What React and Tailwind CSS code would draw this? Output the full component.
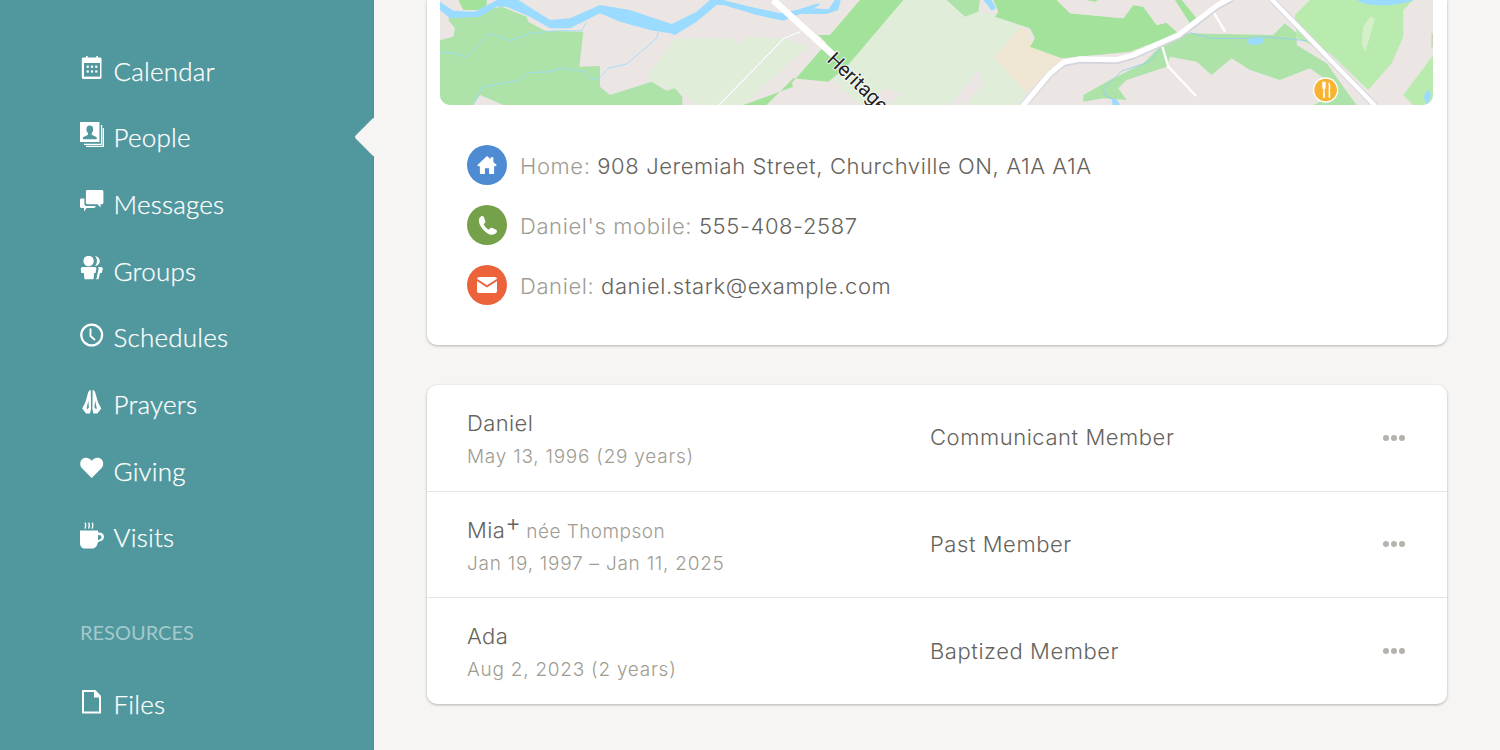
const TEAL = "#51979E";

const Calendar = () => (
  <svg width="24" height="24" viewBox="0 0 24 24">
    <path fill="#fff" d="M4.500 1.600h1.600V0h1.600v1.600h8.600V0h1.600v1.600h2.200c.8 0 1.400.6 1.400 1.400v18.600c0 .8-.6 1.400-1.400 1.400H3.200c-.8 0-1.400-.6-1.400-1.400V3c0-.8.6-1.400 1.400-1.400z" />
    <rect x="4" y="7" width="16" height="13.600" fill={TEAL} />
    <g fill="#fff">
      <rect x="6.600" y="9.600" width="2.200" height="2.200" /><rect x="10.900" y="9.600" width="2.200" height="2.200" /><rect x="15.200" y="9.600" width="2.200" height="2.200" />
      <rect x="6.600" y="14.400" width="2.200" height="2.200" /><rect x="10.900" y="14.400" width="2.200" height="2.200" /><rect x="15.200" y="14.400" width="2.200" height="2.200" />
    </g>
  </svg>
);
const People = () => (
  <svg width="24" height="26" viewBox="0 0 24 26">
    <rect x="0" y="0" width="19.500" height="20" fill="#fff" />
    <path fill={TEAL} d="M9.800 3.400c2.200 0 3.400 1.700 3.400 3.900 0 1.700-.7 3-1.500 3.800v1.700l5 2.400v2.100H3v-2.100l5-2.400v-1.700c-.9-.8-1.600-2.100-1.600-3.800 0-2.200 1.200-3.900 3.400-3.900z" />
    <path fill="none" stroke="#fff" strokeWidth="1.300" d="M21.600 3v19.300H4M23.400 6v18.300H6" />
  </svg>
);
const Messages = () => (
  <svg width="24" height="24" viewBox="0 0 24 24">
    <path fill="#fff" d="M7.500 0h14.300c1 0 1.600.6 1.600 1.600v11c0 1-.6 1.600-1.600 1.600h-1.300v3.300l-3-3.300H7.500c-1 0-1.600-.6-1.600-1.600v-11C5.900.6 6.500 0 7.500 0z" />
    <path fill="#fff" d="M1.400 8.500h3v5.500c0 1.300.8 2 2 2h9.300c-.2 1.200-.8 2-1.900 2H6.500l-2.500 3.500V18H1.400C.5 18 0 17.400 0 16.500V10c0-.9.5-1.500 1.400-1.500z" />
  </svg>
);
const Groups = () => (
  <svg width="24" height="24" viewBox="0 0 24 24">
    <circle cx="8.600" cy="5" r="5.200" fill="#fff" />
    <path fill="#fff" d="M15 .2c2.800 0 4.800 2.200 4.800 4.800s-2 4.800-4.800 4.800c1.300-1.200 2-3 2-4.800S16.300 1.400 15 .2z" />
    <path fill="#fff" d="M3 11h11.500c1.200 0 2 .8 1.800 1.800l-.7 4.200h-1.400l-.7 6.300H4.500l-.7-6.300H1.300L.8 12.800C.7 11.800 1.800 11 3 11z" />
    <path fill="#fff" d="M17.500 11h3.300c1.300 0 2.200.9 1.900 2.100l-.9 3.900h-1.800l-1.500 6.300h-2.200l1.400-6.300.9-4c.2-.8-.1-1.500-.6-2z" />
  </svg>
);
const Clock = () => (
  <svg width="24" height="24" viewBox="0 0 24 24">
    <circle cx="11.700" cy="12" r="10.400" fill="none" stroke="#fff" strokeWidth="2.200" />
    <path d="M10.500 5.500v7.500l4.500 4" fill="none" stroke="#fff" strokeWidth="1.900" />
  </svg>
);
const Prayers = () => (
  <svg width="24" height="26" viewBox="0 0 24 26">
    <path fill="#fff" d="M10.800 1C9.500 1 8.500 2 8 4L5.500 13 2.200 19.500 6 24.500H10L11 20z" />
    <path fill="#fff" d="M12.600 1C13.900 1 14.900 2 15.400 4L17.900 13 21.200 19.500 17.400 24.500H13.400L12.400 20z" />
    <path fill={TEAL} d="M8.300 11.500L8.900 18.500 7 20.500 6.800 18.500z M15.100 11.500L14.500 18.500 16.400 20.500 16.600 18.500z" />
  </svg>
);
const Heart = () => (
  <svg width="24" height="22" viewBox="0 0 24 22">
    <path fill="#fff" d="M11.700 21L2 11.200C-.5 8.500-.3 4.200 2.300 2c2.600-2.200 6.700-1.800 9.400 1.800C14.400.2 18.500-.2 21.100 2c2.600 2.200 2.800 6.500.3 9.200z" />
  </svg>
);
const Mug = () => (
  <svg width="24" height="28" viewBox="0 0 24 28">
    <path d="M5.200 1.600l.5 2.500-.5 3.500M8.800 1.600l.5 2.500-.5 3.500M12.300 1.600l.5 2.500-.5 3.500" fill="none" stroke="#fff" strokeWidth="1.400" />
    <path fill="#fff" fillRule="evenodd" d="M0 9.600h18v2h1.500c2.600 0 4.500 1.700 4.500 4.200 0 2.500-1.700 4-4 4.500-.8.200-1.500.5-2.200 1.200-.5 3.500-2.500 6-5.800 6H5c-3 0-5-2-5-6zM18 14v5c2-.3 3.500-1.200 3.500-3 0-1.600-1.500-2.400-3.500-2z" />
  </svg>
);
const File = () => (
  <svg width="24" height="24" viewBox="0 0 24 24">
    <path d="M3 1h12l5 5.500V22.500H3z" fill="none" stroke="#fff" strokeWidth="2" />
    <path d="M14 1v6.500h6z" fill="#fff" />
  </svg>
);

const nav = [
  ["Calendar", Calendar],
  ["People", People],
  ["Messages", Messages],
  ["Groups", Groups],
  ["Schedules", Clock],
  ["Prayers", Prayers],
  ["Giving", Heart],
  ["Visits", Mug],
];

function NavRow({ label, Icon, active }) {
  return (
    <div className="relative flex h-[66.670px] items-center pl-[80px]">
      <span className="mb-[5px] flex w-[33.500px] shrink-0">
        <Icon />
      </span>
      <span className="mb-[0.500px] font-['Lato',sans-serif] text-[26px] leading-none font-light tracking-[0.2px] text-white [-webkit-text-stroke:0.25px_#fff]">{label}</span>
      {active && <span className="absolute top-[19px] right-[-15px] h-[28px] w-[28px] rotate-45 rounded-[2px] bg-[#F6F5F3]" />}
    </div>
  );
}

function MapImage() {
  return (
    <svg className="block h-[105px] w-full" viewBox="0 0 993 105" preserveAspectRatio="none">
      <rect width="993" height="105" fill="#EBE6E3" />
      <g transform="translate(-10 0) scale(0.3333)">
        <path fill="#DFEDD9" d="M650 230L735 115 900 115 925 132 960 110 1060 115 1130 140 940 315 870 315 800 315 760 280 665 245z" />
        <path fill="#DFEDD9" d="M1190 220L1420 0 1530 0 1530 315 1370 315 1420 280 1370 265 1290 315 1210 240z" />
        <path fill="#ADE3A9" d="M30 120L70 110 75 85 55 60 60 40 140 35 215 20 290 50 295 65 345 92 460 95 448 200 510 198 510 260 540 285 665 245 710 272 735 265 757 290 757 315 220 315 150 285 130 315 30 315z" />
        <path fill="#A3E29B" d="M85 0H170V30H100z" />
        <path fill="#A3E29B" d="M940 315L1090 260 1085 250 1190 130 1165 105 1200 105 1290 0 1420 0 1250 200 1195 245 1090 235 1010 315z" />
        <path fill="none" stroke="#9BDBFF" strokeWidth="2.500" d="M30 158L70 158 110 172 180 100 240 122 300 100 380 92 455 92 470 65" />
        <path fill="none" stroke="#9BDBFF" strokeWidth="2.500" d="M130 315L155 262 270 240 295 218 365 215 392 205 465 215 485 237 505 237 535 205 590 192 680 115 685 95" />
        <path fill="#9BDBFF" d="M30 5L70 32 135 35 200 0 265 0 360 60 420 55 510 15 600 30 725 72 800 35 840 0 880 0 960 20 1050 40 1100 30 1165 10 1170 15 1150 25 1195 28 1215 0 1232 0 1225 30 1190 42 1110 42 1060 62 980 45 880 15 860 15 800 65 735 105 720 100 660 90 570 65 510 40 420 85 360 85 300 50 230 20 200 20 150 50 60 55 30 30z" />
        <path fill="none" stroke="#D9D9E0" strokeWidth="5" d="M1112 95L1062 115 870 312 865 318" />
        <path fill="none" stroke="#fff" strokeWidth="3.500" d="M1112 95L1062 115 870 312 865 318" />
        <path fill="none" stroke="#fff" strokeWidth="20" d="M1030 0L1210 165" />
        <text x="1188" y="182" transform="rotate(44 1188 182)" fontFamily="Roboto, sans-serif" fontSize="60" fill="#222" stroke="#fff" strokeWidth="5" paintOrder="stroke">Heritage</text>
      </g>
      <g transform="translate(490 0) scale(0.3333)">
        <path fill="#EEE6D3" d="M190 172L275 80 300 95 300 120 395 180 290 280z" />
        <path fill="#DFEDD9" d="M0 0H50L105 50 145 35 200 45 195 50 275 80 190 172 290 280 270 315H110L160 250 145 210 60 315H0z" />
        <path fill="#ADE3A9" d="M50 0H150L145 35 105 50z" />
        <path fill="#A3E29B" d="M190 0H380L420 40 580 55 610 15 640 20 680 75 710 68 745 100 600 155 395 175 300 140 315 115 300 85 195 50 205 35z" />
        <path fill="#EBE6E3" d="M380 0H735L800 60 745 100 710 68 680 75 640 20 610 15 580 55 420 40z" />
        <path fill="#A3E29B" d="M470 0H505L495 5zM735 0H755L800 55 780 70z" />
        <path fill="#ADE3A9" d="M700 130L760 100 1030 105 1065 70 1100 100 1100 135 1190 190 1240 260 1280 315H1150L1225 280 1190 240 1140 205 1050 240 960 210 905 175 845 225 800 185 720 170 710 200 590 240 565 265 590 300 520 295 460 305 460 285 540 240 640 190z" />
        <path fill="#BAEBAE" d="M1095 45L1140 0 1450 0 1420 30 1420 110 1385 190 1315 270 1200 160 1100 115z" />
        <path fill="#BAEBAE" d="M1420 285L1510 165V315H1450z" />
        <path fill="#9BDBFF" d="M1280 0H1450C1400 20 1310 22 1280 0z" />
        <path fill="#9BDBFF" d="M160 0H185L198 25 185 32z" />
        <path fill="#D5EFC9" d="M1295 130L1300 80 1320 50 1335 55 1320 110 1305 155z" />
        <path fill="#9BDBFF" d="M1482 295C1482 280 1492 268 1500 272 1505 285 1502 305 1490 312z" />
        <path fill="none" stroke="#8FCBF5" strokeWidth="2.500" d="M780 98L845 115 950 115 1000 110 1130 122" />
        <path fill="#9BDBFF" d="M950 120L980 112 1003 115 995 132 960 135z" />
        <path fill="none" stroke="#8FCBF5" strokeWidth="2.500" d="M695 145L655 187 575 213 520 268 525 285 548 298" />
        <path fill="#9BDBFF" d="M545 295L560 298 570 315H548z" />
        <path fill="none" stroke="#fff" strokeWidth="7" d="M850 35L885 95" />
        <path fill="none" stroke="#fff" strokeWidth="7" d="M697 140L715 200 798 288" />
        <path fill="none" stroke="#D5D5DE" strokeWidth="21" d="M275 322L360 222 400 190 450 180 560 182 610 168 745 108 860 20 905 -5" />
        <path fill="none" stroke="#fff" strokeWidth="16" d="M275 322L360 220 400 187 450 177 560 179 610 165 745 105 860 17 905 -8" />
        <path fill="none" stroke="#D5D5DE" strokeWidth="19" d="M1022 -5L1340 322" />
        <path fill="none" stroke="#fff" strokeWidth="13" d="M1022 -5L1340 322" />
        <circle cx="1187" cy="270" r="38" fill="#fff" />
        <circle cx="1187" cy="270" r="34" fill="#F7B331" />
        <path d="M1177 245v16c0 4 1 6 3 7l-1 25h6l-1-25c2-1 3-3 3-7v-16z" fill="#fff" />
        <path d="M1196 245c4 3 6 10 5 22h-1l1 26h-5z" fill="#fff" />
        <rect x="1505" y="100" width="3" height="42" fill="#ADCFA0" />
      </g>
    </svg>
  );
}

function ContactRow({ color, icon, label, value }) {
  return (
    <div className="flex items-center gap-[13px]">
      <span className="flex h-[40px] w-[40px] items-center justify-center rounded-full" style={{ backgroundColor: color }}>
        {icon}
      </span>
      <span className="mt-[2px] text-[22px] leading-none font-[350] tracking-[0.6px] text-[#A09C93]">
        {label} <span className="text-[#66635C]">{value}</span>
      </span>
    </div>
  );
}

function PersonRow({ name, sup, nee, date, status, last, h }) {
  return (
    <div className={`flex items-center pr-[42px] pl-[40px] ${h} ${last ? "" : "border-b border-[#E6E4E1]"}`}>
      <div className="w-[463px] self-start pt-[22px]">
        <div className="flex h-[32px] items-baseline text-[22px] leading-[32px] font-[350] tracking-[0.4px] text-[#66635C]">
          <span>{name}</span>
          {sup && <span className="relative -top-[7px] text-[24px] leading-none font-light">+</span>}
          {nee && <span className="ml-[5px] text-[19px] leading-none tracking-[0.45px] text-[#A09C93]">{nee}</span>}
        </div>
        <div className="text-[19px] leading-[36px] font-[350] tracking-[0.75px] text-[#A09C93]">{date}</div>
      </div>
      <div className="flex-1 text-[22px] font-[350] tracking-[0.55px] text-[#66635C]">{status}</div>
      <div className="flex gap-[2px]">
        <span className="h-[6px] w-[6px] rounded-full bg-[#B5B1AB]" />
        <span className="h-[6px] w-[6px] rounded-full bg-[#B5B1AB]" />
        <span className="h-[6px] w-[6px] rounded-full bg-[#B5B1AB]" />
      </div>
    </div>
  );
}

export default function App() {
  return (
    <div className="flex h-[750px] w-[1500px] overflow-hidden bg-[#F6F5F3] font-['Inter',sans-serif]">
      <aside className="h-full w-[374px] shrink-0 border-r border-[#2EA0A0] bg-[#51979E] pt-[37.500px]">
        {nav.map(([label, Icon]) => (
          <NavRow key={label} label={label} Icon={Icon} active={label === "People"} />
        ))}
        <div className="mt-[49px] mb-[27px] pl-[80px] font-['Lato',sans-serif] text-[20px] leading-[24px] font-normal text-[#A3CACC]">RESOURCES</div>
        <NavRow label="Files" Icon={File} />
      </aside>
      <main className="flex flex-1 flex-col gap-[40px] pr-[53px] pl-[53px]">
        <section className="rounded-b-[10px] bg-white shadow-[0_1px_3px_rgba(0,0,0,0.28)]">
          <div className="pr-[14px] pl-[13px]">
            <div className="overflow-hidden rounded-b-[10px]">
              <MapImage />
            </div>
          </div>
          <div className="flex flex-col gap-[20px] px-[40px] pt-[40px] pb-[40px]">
            <ContactRow
              color="#4F8BD3"
              label="Home:"
              value="908 Jeremiah Street, Churchville ON, A1A A1A"
              icon={
                <svg width="20" height="20" viewBox="0 0 22 22">
                  <path fill="#fff" d="M11 1L15 4.800V2.500H18V7.600L21.800 11.300 20.500 12.300H18.800V21H13.300V14.500H8.700V21H3.200V12.300H1.500L.2 11.300z" />
                </svg>
              }
            />
            <ContactRow
              color="#75A14A"
              label="Daniel's mobile:"
              value="555-408-2587"
              icon={
                <svg width="21" height="21" viewBox="0 0 22 22">
                  <path fill="#fff" d="M3.500 2C5 .5 7 1 7.500 3L8.800 6.500C9 8 8 8.800 7 9.500 8 12.500 10 14.500 12.500 15.500 13.500 14 14.500 13 16 13.600L20 15.500C21.500 16.500 21 18.500 19.500 19.500 17 21.500 13 21 9.500 18 5.500 15 2.500 10.500 2 6.500 1.800 4.500 2.300 3 3.500 2z" />
                </svg>
              }
            />
            <ContactRow
              color="#EC633B"
              label="Daniel:"
              value="daniel.stark@example.com"
              icon={
                <svg width="20" height="16.400" viewBox="0 0 22 18">
                  <path fill="#fff" d="M2.500 0H19.500C20.800 0 21.800.8 22 2L11 9 0 2C.2.800 1.200 0 2.500 0z" />
                  <path fill="#fff" d="M0 4.500L11 11.500 22 4.500V15.500C22 17 21 18 19.500 18H2.500C1 18 0 17 0 15.500z" />
                </svg>
              }
            />
          </div>
        </section>
        <section className="rounded-[10px] bg-white shadow-[0_1px_3px_rgba(0,0,0,0.28)]">
          <PersonRow h="h-[106.500px]" name="Daniel" date="May 13, 1996 (29 years)" status="Communicant Member" />
          <PersonRow h="h-[106.500px]" name="Mia" sup nee="née Thompson" date="Jan 19, 1997 – Jan 11, 2025" status="Past Member" />
          <PersonRow h="h-[106px]" name="Ada" date="Aug 2, 2023 (2 years)" status="Baptized Member" last />
        </section>
      </main>
    </div>
  );
}
